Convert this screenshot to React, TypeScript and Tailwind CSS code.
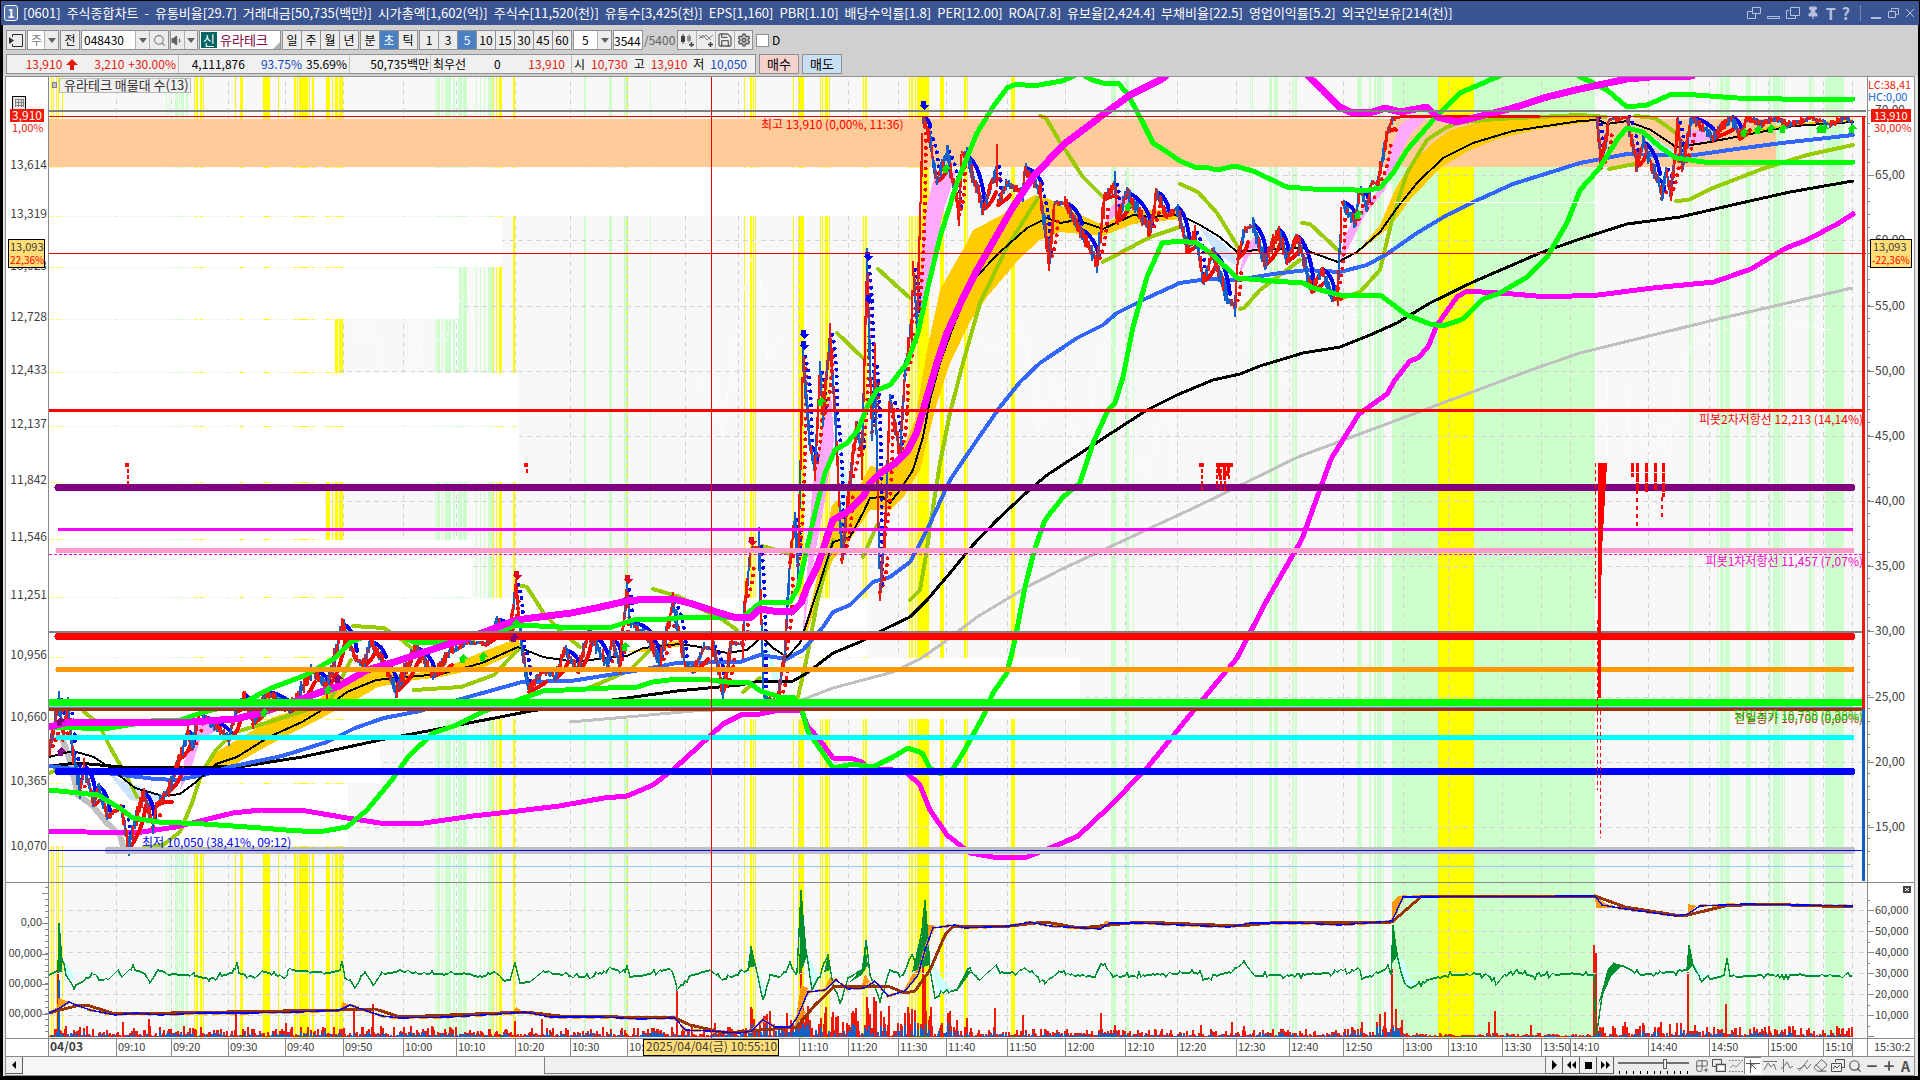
import React, { useState } from 'react';
import { Eraser, Grid2x2Plus, Minus, Pin, Plus, Save, Search, Settings, Volume1 } from 'lucide-react';

const TITLE =
  '[0601] 주식종합차트 - 유통비율[29.7] 거래대금[50,735(백만)] 시가총액[1,602(억)] 주식수[11,520(천)] 유통수[3,425(천)] EPS[1,160] PBR[1.10] 배당수익률[1.8] PER[12.00] ROA[7.8] 유보율[2,424.4] 부채비율[22.5] 영업이익률[5.2] 외국인보유[214(천)]';

const PERIODS = ['일', '주', '월', '년'];
const UNITS = ['분', '초', '틱'];
const INTERVALS = ['1', '3', '5', '10', '15', '30', '45', '60'];

// [x, width]
const YELLOW = [
  [51, 1], [53, 1], [56, 1], [58, 1], [62, 1], [194, 1], [196, 2], [200, 2], [203, 1], [235, 1], [240, 3], [263, 7],
  [278, 1], [294, 2], [297, 1], [299, 9], [309, 1], [312, 2], [326, 4], [332, 1], [335, 3], [339, 4], [493, 1],
  [496, 1], [499, 3], [513, 2], [627, 1], [744, 1], [750, 2], [753, 1], [755, 1], [793, 1], [798, 6], [820, 1],
  [822, 1], [825, 3], [829, 1], [863, 1], [865, 2], [909, 1], [911, 2], [915, 1], [917, 12], [940, 4], [964, 2],
  [967, 1], [1011, 4], [1438, 36],
];
const GREEN = [
  [166, 1], [169, 1], [175, 3], [179, 1], [181, 3], [186, 2], [435, 1], [437, 3], [442, 1], [445, 6], [453, 2],
  [458, 4], [463, 4], [476, 1], [480, 1], [484, 1], [488, 6], [584, 2], [609, 3], [624, 3], [650, 1], [1111, 5],
  [1126, 3], [1133, 1], [1250, 1], [1252, 1], [1269, 3], [1274, 4], [1292, 2], [1295, 2], [1357, 5], [1369, 2],
  [1374, 2], [1377, 5], [1383, 1], [1392, 203], [1689, 2], [1692, 1], [1717, 1], [1720, 4], [1725, 5], [1746, 5],
  [1756, 1], [1769, 2], [1773, 7], [1781, 2], [1784, 1], [1809, 3], [1813, 1], [1825, 19],
];

// volume profile: [top, bottom, right]
const PROFILE = [
  [168, 216, 922], [217, 267, 502], [268, 319, 459], [320, 372, 334], [373, 426, 519], [427, 482, 519],
  [483, 539, 324], [540, 597, 472], [598, 657, 867], [658, 719, 1080], [720, 783, 380], [784, 846, 348],
];

const TIMES: [number, string][] = [
  [116, '09:10'], [171, '09:20'], [228, '09:30'], [285, '09:40'], [343, '09:50'], [403, '10:00'], [456, '10:10'],
  [515, '10:20'], [570, '10:30'], [627, '10:'], [685, ''], [738, ''], [799, '11:10'], [848, '11:20'],
  [898, '11:30'], [946, '11:40'], [1007, '11:50'], [1065, '12:00'], [1125, '12:10'], [1177, '12:20'],
  [1236, '12:30'], [1289, '12:40'], [1343, '12:50'], [1403, '13:00'], [1448, '13:10'], [1502, '13:30'],
  [1541, '13:50'], [1570, '14:10'], [1648, '14:40'], [1709, '14:50'], [1768, '15:00'], [1823, '15:10'], [1852, ''],
];

const LEFT_LABELS: [number, string][] = [
  [165, '13,614'], [214, '13,319'], [266, '13,023'], [317, '12,728'], [370, '12,433'], [424, '12,137'],
  [480, '11,842'], [537, '11,546'], [595, '11,251'], [655, '10,956'], [717, '10,660'], [781, '10,365'],
  [846, '10,070'],
];
const LEFT_LOWER_LABELS: [number, string][] = [
  [922, '0,00'], [953, '00,000'], [983, '00,000'], [1013, '00,000'],
];

const RIGHT_LABELS: [number, string][] = [
  [110, '70,00'], [175, '65,00'], [240, '60,00'], [306, '55,00'], [371, '50,00'], [436, '45,00'], [501, '40,00'],
  [566, '35,00'], [631, '30,00'], [697, '25,00'], [762, '20,00'], [827, '15,00'],
];
const VOLUME_LABELS: [number, string][] = [
  [910, '60,000'], [931, '50,000'], [952, '40,000'], [973, '30,000'], [994, '20,000'], [1015, '10,000'],
];

// [y, thickness, color, from, to, round cap]
const LEVELS: [number, number, string, number, number, boolean?][] = [
  [110, 2, '#808080', 49, 1866],
  [631, 2, '#808080', 49, 1862],
  [410, 3, '#ff0000', 49, 1862],
  [487, 7, '#800080', 58, 1852, true],
  [529, 3, '#ff00ff', 58, 1853],
  [550, 5, '#ff99cc', 58, 1852, true],
  [636, 7, '#ff0000', 58, 1852, true],
  [669, 5, '#ff9900', 58, 1852, true],
  [737, 5, '#00ffff', 58, 1852, true],
  [771, 7, '#0000ff', 58, 1852, true],
  [850, 7, '#c0c0c0', 108, 1852, true],
  [866, 1, '#99ccff', 58, 1852],
];

const MAGENTA_UP = [
  '49,727 65,723 192,722 235,719 261,713 296,701 318,693 339,686 367,670 388,664 449,644 482,633 516,620 571,613 596,608 627,601 648,599 673,599 693,604 713,611 733,617 750,618 760,609 773,611 792,612 801,603 807,587 817,567 823,550 827,537 833,520 847,512 863,497 870,483 880,473 893,465 907,452 917,432 927,397 937,363 947,333 963,298 977,270 993,242 1013,207 1033,177 1063,145 1100,117 1130,95 1160,80 1166,76',
  '1308,76 1312,80 1323,90 1338,106 1350,112 1373,112 1385,108 1400,112 1427,107 1437,117 1457,122 1473,118 1513,108 1547,97 1580,89 1594,86 1627,79 1650,77 1692,76',
];
const MAGENTA_LOW = [
  '49,831 86,832 135,833 176,827 204,820 233,813 261,810 306,811 347,818 380,823 424,823 473,816 518,811 559,806 604,798 627,796 653,785 675,768 698,747 723,724 743,714 760,714 780,710 801,710 808,727 820,740 833,758 850,758 862,762 870,770 888,769 907,773 920,785 930,810 947,835 970,853 993,857 1027,857 1060,844 1078,836 1108,808 1147,768 1194,710 1237,658 1267,600 1302,539 1331,459 1359,414 1387,394 1395,380 1410,361 1418,358 1428,347 1437,325 1457,297 1467,291 1513,294 1547,297 1598,295 1653,288 1714,282 1751,269 1786,248 1807,240 1839,223 1853,214',
];
const LIME = [
  '49,727 82,728 110,728 151,721 180,720 204,712 245,702 269,689 306,675 335,658 351,642 367,636 384,633 400,636 416,643 445,642 482,637 518,625 559,627 612,627 633,620 667,619 687,617 743,617 760,603 790,602 798,588 805,557 815,513 825,473 835,450 847,443 858,430 867,407 877,390 890,385 907,363 918,333 928,287 940,237 957,183 977,133 993,107 1007,88 1017,84 1033,86 1062,81 1074,76',
  '1085,76 1092,80 1103,83 1118,83 1127,93 1140,117 1153,143 1167,152 1180,161 1197,168 1205,167 1217,170 1235,166 1253,171 1287,187 1313,189 1347,189 1363,191 1380,188 1393,173 1407,150 1435,118 1460,93 1490,80 1500,76',
  '1579,76 1607,90 1627,107 1647,105 1672,94 1696,95 1737,98 1782,99 1853,99',
  '49,790 98,795 118,807 133,818 159,822 204,824 261,828 286,830 318,832 347,827 367,810 392,780 408,757 433,733 457,725 482,712 518,700 543,691 608,688 637,687 653,682 677,679 710,680 727,682 750,683 760,691 780,697 793,697 802,710 808,732 823,753 833,768 853,764 873,767 893,757 908,748 922,753 930,768 940,774 953,769 963,753 985,713 993,693 1007,673 1015,640 1025,587 1035,548 1045,520 1063,497 1080,483 1093,443 1108,410 1115,403 1123,377 1133,327 1147,277 1162,243 1180,241 1197,243 1213,255 1237,278 1273,281 1303,283 1313,288 1340,295 1380,295 1407,315 1430,324 1443,326 1463,319 1483,299 1500,293 1527,277 1547,257 1567,223 1580,190 1598,170 1619,137 1627,128 1643,132 1660,147 1676,158 1704,162 1853,162',
];
const BLUE_MA =
  '49,766 122,775 155,779 176,780 204,775 229,767 282,756 327,742 355,728 384,718 420,711 461,699 522,682 571,681 640,670 677,663 740,662 760,655 787,659 803,650 823,627 833,612 850,605 873,582 890,577 910,562 922,540 933,517 950,480 977,440 1000,407 1020,382 1040,363 1077,338 1103,325 1117,313 1147,298 1180,283 1207,279 1237,280 1273,274 1307,270 1340,272 1367,265 1387,254 1417,233 1447,215 1480,199 1513,184 1580,163 1627,154 1688,156 1729,150 1782,143 1853,135';
const BLACK_MA =
  '49,766 78,763 122,767 184,768 245,766 302,757 339,749 380,740 433,730 469,723 531,711 627,698 677,691 740,685 760,681 793,681 807,673 833,653 860,642 887,628 910,617 927,600 950,573 973,545 997,520 1027,492 1047,475 1093,445 1147,410 1177,395 1213,380 1240,374 1260,366 1303,353 1340,347 1370,335 1397,323 1430,303 1473,282 1540,253 1580,239 1627,224 1680,217 1741,203 1790,192 1853,181';
const SILVER_MA =
  '570,722 627,717 693,711 780,707 807,698 833,688 893,672 920,659 943,643 977,617 1027,587 1060,570 1200,505 1298,457 1408,416 1531,370 1580,353 1714,320 1852,288';
const BASE_LINE =
  '49,757 73,751 94,757 110,768 135,788 163,796 180,794 196,782 216,764 237,757 269,737 302,722 327,707 347,692 376,680 408,677 441,674 482,663 518,647 543,657 576,662 612,657 627,656 643,648 680,644 700,647 727,653 747,650 762,637 773,648 787,657 800,643 810,613 823,573 833,542 850,537 863,513 870,498 883,497 890,503 900,490 913,470 923,437 930,400 940,363 953,327 973,280 1000,252 1027,228 1047,218 1060,223 1077,220 1103,229 1133,215 1150,217 1180,215 1200,225 1220,237 1237,252 1257,250 1303,248 1313,253 1338,262 1357,252 1380,232 1397,208 1417,183 1443,158 1473,143 1513,131 1580,121 1598,120 1607,124 1627,121 1651,130 1676,147 1704,143 1741,136 1770,130 1794,126 1853,122';

const OLIVE = [
  '49,773 65,767', '84,712 98,723 110,747 127,777 137,797',
  '143,848 163,845 180,832 192,803 202,772 216,750 233,733 269,722 314,708 330,700 351,660',
  '353,626 384,628 402,640 416,652', '414,690 461,687 494,675 508,660 518,650', '518,585 527,587 543,612 559,630 580,647',
  '584,690 612,678 630,670 650,650', '653,589 680,597 703,610 723,620 737,630', '743,692 760,678', '762,546 790,554',
  '798,697 807,657 817,603 827,563 833,540', '863,557 877,525', '910,600 920,590 926,555 930,527 940,463 950,413 963,363 980,303 1007,247 1038,198',
  '878,269 910,298', '837,333 863,358', '1040,116 1046,118 1060,142 1083,177 1103,197', '1103,262 1120,253 1150,237 1180,227',
  '1180,184 1198,192 1217,213 1240,250', '1240,309 1244,308 1260,290 1300,260', '1302,223 1310,224 1340,252',
  '1337,300 1360,292 1380,270 1392,220 1407,173 1427,140 1447,127 1463,122 1497,119 1580,115 1606,117', '1609,169 1635,164',
  '1635,116 1655,118 1676,133', '1676,201 1688,200 1713,188 1762,169 1807,155 1853,145',
];

const CLOUDS: [string, string][] = [
  ['#ffcc00', '196,782 204,770 216,752 240,738 257,728 273,717 300,709 320,698 335,688 347,678 365,668 376,664 400,675 440,670 482,652 518,638 522,650 482,668 441,677 408,681 378,687 347,705 302,728 269,745 237,763 216,770'],
  ['#ffcc00', '627,652 660,644 680,640 682,646 643,652'],
  ['#ffcc00', '800,643 812,600 822,555 832,505 840,497 860,485 870,466 880,468 900,455 915,420 927,350 940,290 950,272 965,246 973,230 1000,216 1013,207 1035,195 1047,198 1070,210 1103,225 1133,209 1180,211 1180,219 1133,224 1103,236 1060,232 1040,240 1020,258 987,297 970,322 950,363 935,410 920,470 905,495 890,510 870,510 850,540 833,560 820,590 808,630'],
  ['#ffcc00', '1355,255 1380,225 1395,190 1410,165 1430,145 1450,130 1480,122 1540,117 1598,116 1598,121 1540,129 1500,138 1470,150 1440,168 1410,200 1390,227 1370,243'],
  ['#ffcc00', '1735,137 1755,129 1790,124 1853,119 1853,123 1790,127'],
  ['#ffaaff', '802,640 808,560 812,490 822,430 831,393 834,440 825,500 812,570 804,630'],
  ['#ffaaff', '918,330 922,240 928,200 934,178 945,172 957,170 945,205 935,250 928,290'],
  ['#ffaaff', '1340,262 1345,235 1355,218 1370,200 1383,185 1392,145 1400,125 1412,116 1428,116 1410,135 1395,165 1385,190 1365,215 1350,245'],
  ['#ffaaff', '180,790 186,750 196,727 206,722 218,730 200,740 190,772'],
  ['#ffaaff', '1238,278 1245,250 1255,235 1258,245 1248,258'],
  ['#ffaaff', '1105,225 1112,205 1125,192 1130,203 1115,215'],
  ['#ffaaff', '1684,150 1690,130 1700,130 1712,138 1700,143'],
  ['#ccffff', '836,440 845,470 850,490 842,520 838,480'],
  ['#ccffff', '765,640 775,665 782,690 772,680'],
  ['#cce4ff', '94,760 120,780 150,790 165,797 150,803 130,800 110,775'],
  ['#cce4ff', '1200,227 1222,242 1237,258 1237,266 1215,252'],
  ['#cce4ff', '1640,128 1655,138 1676,152 1670,160 1650,145'],
];

const PRICE =
  '49,750 59,700 63,737 68,707 73,753 80,790 84,767 94,803 98,787 108,817 121,807 129,846 143,793 153,825 157,803 169,790 180,757 188,732 192,747 200,710 208,720 229,738 237,710 244,695 253,722 267,692 290,710 312,670 327,687 343,625 355,657 363,665 371,642 384,663 396,690 416,648 433,675 449,653 465,643 486,643 498,620 510,633 516,585 522,647 529,690 543,670 555,677 565,650 578,670 588,633 608,665 612,640 620,663 627,590 630,622 648,637 660,663 673,602 685,663 693,670 705,647 713,647 723,690 732,643 743,643 745,600 751,550 759,547 764,697 777,702 785,653 790,560 795,520 798,563 803,357 810,447 815,467 820,373 823,417 830,335 835,413 842,557 850,480 857,427 862,453 867,267 872,430 875,367 880,590 885,533 890,397 900,453 905,373 912,320 913,270 917,320 923,118 928,133 937,180 947,152 959,213 962,152 967,157 983,208 993,180 997,167 998,203 1007,183 1023,193 1025,168 1040,190 1049,260 1055,203 1065,203 1080,230 1097,262 1105,197 1115,185 1117,220 1127,193 1150,230 1157,193 1167,217 1177,208 1188,250 1195,233 1203,280 1213,253 1228,300 1235,305 1238,257 1245,230 1253,225 1265,263 1278,230 1287,260 1297,237 1312,290 1322,270 1333,298 1338,287 1342,202 1355,223 1360,190 1367,207 1372,182 1378,183 1388,130 1393,118 1400,116';
const PRICE_LATE =
  '1597,118 1601,166 1609,120 1627,117 1637,165 1643,143 1658,180 1662,196 1666,170 1671,193 1678,123 1682,165 1692,118 1713,137 1731,117 1740,137 1747,118 1762,124 1775,118 1790,125 1810,118 1830,124 1845,118 1853,122';

const OSC =
  '49,975 58,970 59,925 62,960 66,975 74,987 80,983 95,974 100,980 108,980 118,970 122,977 131,968 145,974 150,983 158,970 170,974 195,976 210,979 235,972 237,962 239,973 255,978 262,971 285,978 288,970 330,973 340,970 342,961 345,978 350,980 355,988 365,972 374,985 380,975 400,971 420,974 470,974 480,978 495,972 505,980 510,980 515,963 520,983 530,982 543,971 555,974 590,978 610,968 625,972 627,966 630,977 650,974 672,968 677,990 690,976 710,970 722,980 740,974 748,970 751,949 756,968 763,1001 770,975 780,977 790,965 797,975 801,890 806,950 812,990 820,974 828,955 833,985 840,1003 848,978 862,970 866,940 870,975 880,1000 890,970 903,975 912,955 915,965 922,930 925,897 930,970 935,998 945,992 957,990 968,969 980,980 996,965 1000,973 1020,972 1024,968 1045,982 1060,972 1095,977 1101,963 1115,977 1160,974 1200,973 1203,980 1235,970 1244,962 1255,976 1335,973 1343,968 1350,973 1358,968 1362,979 1385,970 1388,965 1391,975 1393,925 1397,955 1405,985 1411,988 1430,979 1450,975 1480,974 1494,978 1496,985 1505,974 1515,972 1533,976 1570,974 1594,975 1596,1035 1602,998 1608,970 1615,964 1625,967 1640,975 1680,971 1687,970 1689,945 1693,965 1700,979 1712,979 1724,975 1727,958 1730,976 1738,977 1760,975 1853,976';
const OSC_FILLS: [string, string][] = [
  ['#ccffff', '62,960 68,965 76,980 66,978'], ['#ccffff', '806,950 815,970 818,980 812,988'],
  ['#ccffff', '756,968 766,990 763,1000'], ['#ccffff', '929,955 940,975 952,990 938,995'],
  ['#ccffff', '1397,953 1404,962 1410,980 1420,984 1405,986'], ['#ccffff', '1692,962 1700,970 1708,979 1698,978'],
  ['#009030', '58,972 59,925 62,958 62,972'], ['#009030', '799,975 801,892 807,955 804,965'],
  ['#009030', '824,972 828,955 831,970'], ['#009030', '850,982 862,968 865,945 868,965 862,975'],
  ['#009030', '912,972 922,935 925,898 929,965'], ['#009030', '958,990 967,970 971,972'],
  ['#009030', '1391,965 1393,926 1398,955'], ['#009030', '1598,1005 1608,968 1615,963 1622,966 1612,975 1604,992'],
  ['#009030', '1687,972 1689,945 1693,965'], ['#009030', '748,968 751,949 756,966'],
];
const TREND_BLUE =
  '49,1013 60,1008 69,1002 76,1005 90,1010 115,1015 135,1013 160,1015 200,1013 250,1013 300,1012 340,1010 350,1005 370,1012 382,1016 400,1018 450,1017 500,1014 525,1012 550,1017 600,1017 640,1019 675,1018 685,1030 710,1031 740,1033 752,1031 763,1020 775,1027 790,1027 797,1018 808,992 825,990 836,980 848,989 865,988 875,981 888,996 905,991 918,975 925,950 933,928 955,925 965,928 1010,926 1030,922 1050,926 1100,929 1110,923 1140,923 1180,925 1230,927 1250,923 1300,923 1340,925 1392,921 1403,897 1595,896 1602,905 1625,909 1655,913 1675,916 1688,914 1700,906 1745,904 1853,906';
const TREND_BROWN =
  '49,1013 60,1010 80,1005 90,1006 115,1014 340,1010 375,1009 400,1017 525,1012 560,1016 675,1018 690,1025 725,1033 797,1027 815,1005 835,986 870,986 890,987 905,993 915,991 930,970 945,935 953,926 1010,926 1045,922 1080,928 1110,925 1140,922 1240,926 1270,923 1392,922 1422,896 1595,896 1625,907 1675,915 1688,915 1725,906 1760,904 1853,907';
const ORANGE_FILLS = [
  '57,1010 58,998 63,1000 69,1002 60,1009', '340,1010 343,1002 350,1005', '513,1012 516,1007 522,1011',
  '790,1026 796,1018 801,985 808,988 802,1015', '824,990 830,977 836,980', '861,988 865,974 870,982',
  '903,992 912,975 920,965 928,925 934,925 926,955 918,975', '1101,928 1105,921 1113,922', '1392,921 1392,902 1398,896 1405,896',
  '1595,896 1596,908 1612,908', '1688,914 1688,904 1697,906', '794,1028 800,1010 806,1012',
];

const SPIKES = [
  [58, 68], [123, 15], [149, 18], [236, 26], [286, 14], [354, 26], [373, 33], [515, 16], [542, 18], [677, 46],
  [715, 14], [751, 30], [770, 26], [801, 138], [803, 50], [808, 30], [826, 30], [833, 25], [849, 12], [867, 40],
  [874, 40], [876, 36], [889, 12], [909, 24], [912, 28], [923, 120], [925, 60], [967, 19], [995, 29], [1023, 22],
  [1101, 24], [1115, 12], [1201, 12], [1232, 15], [1244, 11], [1362, 15], [1385, 25], [1392, 68], [1396, 28],
  [1402, 17], [1489, 15], [1495, 26], [1531, 12], [1594, 92], [1596, 84], [1640, 11], [1661, 15], [1688, 65],
  [1726, 33], [1775, 8], [1839, 9], [1852, 10],
];

const ARROWS: [number, number, 'up' | 'down', string][] = [
  [923, 105, 'down', '#0000ff'], [803, 334, 'down', '#0000ff'], [803, 345, 'down', '#0000ff'], [867, 256, 'down', '#0000ff'],
  [868, 299, 'down', '#0000ff'], [516, 575, 'down', '#e00020'], [627, 579, 'down', '#e00020'], [751, 541, 'down', '#e00020'],
  [59, 722, 'up', '#800080'], [60, 752, 'up', '#800080'], [513, 638, 'up', '#800080'], [337, 679, 'up', '#800080'],
  [263, 713, 'up', '#00e600'], [327, 690, 'up', '#00e600'], [462, 659, 'up', '#00e600'], [482, 657, 'up', '#00e600'],
  [515, 624, 'up', '#00e600'], [624, 647, 'up', '#00e600'], [820, 402, 'up', '#00e600'], [945, 169, 'up', '#00e600'],
  [1127, 207, 'up', '#00e600'], [1357, 215, 'up', '#00e600'], [1743, 133, 'up', '#00e600'], [1757, 130, 'up', '#00e600'],
  [1770, 129, 'up', '#00e600'], [1782, 129, 'up', '#00e600'], [1819, 129, 'up', '#00e600'], [1823, 129, 'up', '#00e600'],
  [1851, 129, 'up', '#00e600'],
];

const noise = (n: number) => {
  const v = Math.sin(n * 127.1) * 43758.5453;
  return v - Math.floor(v);
};

const parse = (points: string) => points.split(' ').map((p) => p.split(',').map(Number));

// adds small ticks between the anchor points of the oscillator
const roughen = (points: string) => {
  const pts = parse(points);
  const out: string[] = [];
  for (let i = 1; i < pts.length; i++) {
    const [x0, y0] = pts[i - 1];
    const [x1, y1] = pts[i];
    for (let x = x0; x < x1; x += 2) {
      const y = y0 + ((y1 - y0) * (x - x0)) / (x1 - x0);
      const kick = noise(x + 1) > 0.7 ? (noise(x + 5) - 0.5) * 7 : 0;
      out.push(`${x},${Math.round(y + kick)}`);
    }
  }
  return out.join(' ');
};

const buildCandles = (source: string) => {
  const pts = parse(source);
  let red = '';
  let blue = '';
  const trails = { fall: '', fallSteep: '', rise: '', riseSteep: '' };
  for (let i = 1; i < pts.length; i++) {
    const [x0, y0] = pts[i - 1];
    const [x1, y1] = pts[i];
    const dy = y1 - y0;
    const amp = Math.min(10, 3 + Math.abs(dy) / 7);
    for (let x = x0; x < x1; x++) {
      const t = (x - x0) / (x1 - x0);
      const step = Math.abs(dy) / (x1 - x0) / 2;
      const y = y0 + dy * t;
      const top = Math.max(116, Math.round(y - step - noise(x) * amp));
      const bottom = Math.round(y + step + noise(x + 7) * amp);
      const seg = `M${x} ${top}V${Math.max(bottom, top + 2)}`;
      if (noise(x * 3) > (dy < 0 ? 0.4 : 0.6)) red += seg;
      else blue += seg;
    }
    const steep = Math.abs(dy) > (x1 - x0) * 4;
    if (dy > 10) {
      const d = `M${x0 + 2} ${y0}Q${x0 + (x1 - x0) * 0.6 + 4} ${y0 + dy * 0.2} ${x1 + 2} ${y1 - 6}`;
      if (steep) trails.fallSteep += d;
      else trails.fall += d;
    }
    if (dy < -10) {
      const d = `M${x0} ${y0 + 2}Q${x0 + (x1 - x0) * 0.5 + 5} ${y0 + dy * 0.2} ${x1 + 3} ${y1 + 12}`;
      if (steep) trails.riseSteep += d;
      else trails.rise += d;
    }
  }
  return { red, blue, trails };
};

const Candles = ({ source }: { source: string }) => {
  const { red, blue, trails } = buildCandles(source);
  return (
    <g fill="none">
      <g strokeWidth={4} strokeLinecap="round">
        <path d={trails.rise} stroke="#ff0000" />
        <path d={trails.fall} stroke="#0000ff" />
        <path d={trails.riseSteep} stroke="#ff0000" strokeDasharray="0 7" />
        <path d={trails.fallSteep} stroke="#0000ff" strokeDasharray="0 7" />
      </g>
      <path d={blue} stroke="#1060c8" strokeWidth={1.4} />
      <path d={red} stroke="#f01808" strokeWidth={1.4} />
    </g>
  );
};

const Lines = ({ list, color, width }: { list: string[]; color: string; width: number }) => (
  <g fill="none" stroke={color} strokeWidth={width} strokeLinecap="round" strokeLinejoin="round">
    {list.map((points) => (
      <polyline key={points} points={points} />
    ))}
  </g>
);

const VolumeBars = () => {
  let red = '';
  let blue = '';
  for (let x = 50; x < 1853; x += 1) {
    const busy = x > 745 && x < 960 ? 3 : x > 1375 && x < 1400 ? 3 : x > 1600 && x < 1700 ? 1.4 : 1;
    const quiet = x > 1405 && x < 1594 ? 0.3 : x > 1000 && x < 1340 ? 0.7 : 1;
    const h = Math.round(Math.pow(noise(x), 3) * 10 * busy * quiet) + 1;
    red += `M${x} 1037V${1037 - h}`;
    if (noise(x + 3) > 0.6) blue += `M${x} 1037V${1037 - Math.round(h * 0.4 + noise(x + 9) * 2 * quiet * busy)}`;
  }
  return (
    <g strokeWidth={1.2} fill="none">
      <path d={red} stroke="#f01808" />
      <path d={SPIKES.map(([x, h]) => `M${x} 1037v${-h}`).join('')} stroke="#f01808" strokeWidth={1.6} />
      <path d={blue} stroke="#1060c8" />
      <path d="M59 1037V980" stroke="#1060c8" />
    </g>
  );
};

const arrowPath = (x: number, y: number, dir: 'up' | 'down') =>
  dir === 'down'
    ? `M${x - 2} ${y - 4}h5v4h3l-5 5l-5 -5h2z`
    : `M${x - 2} ${y + 4}h5v-4h3l-5 -5l-5 5h2z`;

const Chart = () => {
  const rightTicks: string[] = [];
  for (let i = 0; i < 59; i++) rightTicks.push(`M1867 ${110 + i * 13}h3`);
  const leftTicks: string[] = [];
  for (let i = 0; i < 25; i++) leftTicks.push(`M48 ${887 + i * 6}h-3`);

  return (
    <svg viewBox="6 77 1908 980" className="block h-auto w-full bg-white text-[12px]" shapeRendering="crispEdges" role="img" aria-label="유라테크">
      <defs>
        <clipPath id="plot">
          <rect x={49} y={77} width={1817} height={961} />
        </clipPath>
      </defs>
      <rect x={49} y={77} width={1817} height={961} fill="#f8f8f8" />
      <g clipPath="url(#plot)">
        {GREEN.map(([x, w]) => (
          <rect key={x} x={x} y={77} width={w} height={961} fill="#ccffcc" />
        ))}
        {YELLOW.map(([x, w]) => (
          <rect key={x} x={x} y={77} width={w} height={961} fill="#ffff00" />
        ))}
        <g stroke="#d4d4d4" strokeDasharray="5 4" transform="translate(0.5 0.5)">
          {TIMES.map(([x]) => (
            <line key={x} x1={x} x2={x} y1={80} y2={1038} />
          ))}
          {RIGHT_LABELS.concat(VOLUME_LABELS).map(([y]) => (
            <line key={y} x1={49} x2={1866} y1={y} y2={y} />
          ))}
        </g>
        {PROFILE.map(([top, bottom, right]) => (
          <rect key={top} x={49} y={top} width={right - 49} height={bottom - top} fill="#ffffff" />
        ))}
        <rect x={49} y={119} width={1727} height={48} fill="#ffcc99" />

        <g fill="none" stroke="#ffffff" strokeDasharray="4 3" strokeWidth={1}>
          <path d="M354 320l4 20l6 -2l2 -18M374 320l3 30l5 20M410 373l6 -50l8 48M437 340l10 0l2 -20l12 -20l8 -10l5 40" />
          <path d="M700 390l10 -25l12 70l12 -85l10 -60l12 -50l12 120l12 -20" />
          <path d="M975 330l12 20l14 -5l14 -15l12 12l12 90l14 -55l14 35l18 60l10 -90l12 -50l20 45l8 80l12 20l20 -80l10 90M1020 325l8 30" />
          <path d="M1240 350l8 -30l10 50M1270 360l8 -30l8 50M1340 300v60M1350 290l5 30l12 -20" />
          <path d="M1607 463v-90M1630 460l-3 -75M1640 400l10 60l12 -30l8 30l4 -70l20 -50l60 -20l80 10" />
        </g>

        <polyline points="61,735 68,755 78,795 92,805 106,822 120,835 124,850" fill="none" stroke="#c0c0c0" strokeWidth={6} />
        {CLOUDS.map(([fill, points]) => (
          <polygon key={points} points={points} fill={fill} />
        ))}
        <Lines list={OLIVE} color="#99cc00" width={4} />
        <Lines list={[SILVER_MA]} color="#c0c0c0" width={3} />
        <Lines list={[BLACK_MA]} color="#000000" width={3} />
        <Lines list={[BLUE_MA]} color="#3366ff" width={4} />
        <Lines list={[BASE_LINE]} color="#000000" width={2} />
        <Lines list={MAGENTA_LOW} color="#ff00ff" width={5} />
        <Candles source={PRICE} />
        <Candles source={PRICE_LATE} />
        <path d="M1400 116H1540" stroke="#ff0000" strokeWidth={3} />
        <Lines list={LIME} color="#00ff00" width={5} />
        <Lines list={MAGENTA_UP} color="#ff00ff" width={7} />
        <path d="M1394 202.5H1597" stroke="#ffffff" />

        {LEVELS.map(([y, w, color, from, to, round]) => (
          <line
            key={y}
            x1={from}
            x2={to}
            y1={y + 0.5}
            y2={y + 0.5}
            stroke={color}
            strokeWidth={w}
            strokeLinecap={round ? 'round' : 'butt'}
          />
        ))}
        <path d="M49 554.5H1862" stroke="#ff00cc" strokeDasharray="3 2" />
        <path d="M49 850.5H1862" stroke="#0000ff" />
        <path d="M49 702.5H1862" stroke="#00ff00" strokeWidth={7} />
        <path d="M49 706.5H1852" stroke="#99ccff" />
        <path d="M49 707.5H1862" stroke="#808080" />
        <path d="M49 709.5H1862" stroke="#993300" strokeWidth={3} />

        <g stroke="#ff0000" fill="none">
          <path d="M127.5 463V486M526.5 463V473M1201.5 463V490M1217 463V488M1221 463V490M1225 463V492M1229 463V480" strokeWidth={2} strokeDasharray="4 2" />
          <path d="M1216 465H1233M1599 465H1607M125 465H129M524 465H528M1199 465H1204" strokeWidth={4} />
          <path d="M1218 466l3 14M1224 466v14M1229 466l-2 10" strokeWidth={3} />
          <path d="M1599.5 463V698" strokeWidth={3} />
          <path d="M1600.5 711V838M1595.5 463V598M1597.5 620V790" strokeDasharray="4 3" strokeWidth={1} />
          <path d="M1632 463V477M1637 463V490M1646 463V492M1655 463V490M1663 463V497" strokeWidth={3} strokeDasharray="9 1" />
          <path d="M1637 490V530M1662 497V518" strokeWidth={2} strokeDasharray="4 4" />
        </g>
        <polygon points="1598,463 1607,463 1602,550 1600,650 1598,600" fill="#ff0000" />

        {ARROWS.map(([x, y, dir, color]) => (
          <path key={`${x}-${y}`} d={arrowPath(x, y, dir)} fill={color} />
        ))}

        <VolumeBars />
        {ORANGE_FILLS.map((points) => (
          <polygon key={points} points={points} fill="#ff9900" />
        ))}
        <path d="M49 973.5H1596M1625 973.5H1853" stroke="#ccffff" />
        {OSC_FILLS.map(([fill, points]) => (
          <polygon key={points} points={points} fill={fill} />
        ))}
        <polyline points={roughen(OSC)} fill="none" stroke="#009030" strokeWidth={1.4} />
        <polyline points={TREND_BLUE} fill="none" stroke="#ff9900" strokeWidth={3} strokeDasharray="9 5" />
        <polyline points={TREND_BROWN} fill="none" stroke="#993300" strokeWidth={3} />
        <polyline points={TREND_BLUE} fill="none" stroke="#0000ff" strokeWidth={1.4} />

        <path d="M49 116.5H1866M49 253.5H1866M711.5 77V1038" stroke="#f00000" />
      </g>

      <rect x={1862} y={116} width={3} height={593} fill="#f01808" />
      <rect x={1862} y={709} width={3} height={172} fill="#1060c8" />

      <g stroke="#888888" fill="none">
        <path d="M6 882.5H1914M6 1038.5H1914M48.5 77V1056M1867.5 77V1056M6 1056.5H1914" />
        <path d={rightTicks.join('')} />
        <path d={leftTicks.join('')} />
        <path d="M1867 175h7M1867 240h7M1867 306h7M1867 371h7M1867 436h7M1867 501h7M1867 566h7M1867 631h7M1867 697h7M1867 762h7M1867 827h7" />
        <path d="M1867 910h7M1867 931h7M1867 952h7M1867 973h7M1867 994h7M1867 1015h7M1867 1036h7M1867 900h3M1867 921h3M1867 942h3M1867 963h3M1867 984h3M1867 1005h3M1867 1026h3" />
        <path d="M48 893h-6M48 923h-6M48 954h-6M48 984h-6M48 1014h-6" />
        <path d={TIMES.map(([x]) => `M${x + 0.5} 1038v18`).join('')} />
      </g>

      <g fill="#404040">
        {LEFT_LABELS.map(([y, label]) => (
          <text key={y} x={47} y={y + 4} textAnchor="end">{label}</text>
        ))}
        {LEFT_LOWER_LABELS.map(([y, label]) => (
          <text key={y} x={42} y={y + 4} textAnchor="end" className="text-[11px]">{label}</text>
        ))}
        {RIGHT_LABELS.map(([y, label]) => (
          <text key={y} x={1875} y={y + 4}>{label}</text>
        ))}
        {VOLUME_LABELS.map(([y, label]) => (
          <text key={y} x={1875} y={y + 4} className="text-[11px]">{label}</text>
        ))}
        <text x={50} y={1051} className="font-bold">04/03</text>
        {TIMES.map(([x, label]) => (
          <text key={x} x={x + 2} y={1051} className="text-[11px]">{label}</text>
        ))}
        <text x={1874} y={1051} className="text-[11px]">15:30:2</text>
      </g>

      <text x={761} y={129} fill="#ff0000">최고 13,910 (0,00%, 11:36)</text>
      <text x={142} y={847} fill="#0000ff">최저 10,050 (38,41%, 09:12)</text>
      <text x={1863} y={424} fill="#ff0000" textAnchor="end">피봇2차저항선 12,213 (14,14%)</text>
      <text x={1863} y={566} fill="#ff00cc" textAnchor="end">피봇1차저항선 11,457 (7,07%)</text>
      <text x={1863} y={723} fill="#993300" textAnchor="end">전일종가 10,700 (0,00%)</text>
      <text x={1863} y={720} fill="#00e000" textAnchor="end">당일시가 10,730 (0,28%)</text>

      <rect x={52.5} y={82.5} width={4} height={5} fill="#c0c0c0" stroke="#808080" />
      <rect x={59.5} y={78.5} width={131} height={14} fill="#f0f0f0" stroke="#b8b8b8" />
      <text x={64} y={90} fill="#303030" className="text-[13px]">유라테크 매물대 수(13)</text>

      <rect x={12.5} y={96.5} width={13} height={13} fill="#e8e8e8" stroke="#000000" />
      <path d="M15 99.5h9M15 102.5h9M15 105.5h9M15.5 99v8M18.5 99v8M21.5 99v8M23.5 99v8" stroke="#808080" />
      <rect x={10} y={109} width={34} height={13} fill="#f01808" />
      <text x={12} y={120} fill="#ffffff">3,910</text>
      <text x={12} y={132} fill="#f01808" className="text-[11px]">1,00%</text>
      <rect x={8.5} y={239.5} width={36} height={28} fill="#ffdd77" stroke="#000000" />
      <text x={10} y={251} fill="#404040" className="text-[11px]">13,093</text>
      <text x={10} y={264} fill="#ff0000" className="text-[10px]">22,36%</text>

      <rect x={1869} y={77} width={45} height={25} fill="#ffffff" />
      <text x={1868} y={89} fill="#f01808" className="text-[11px]">LC:38,41</text>
      <text x={1868} y={101} fill="#1060c8" className="text-[11px]">HC:0,00</text>
      <rect x={1871} y={109} width={40} height={13} fill="#f01808" />
      <text x={1874} y={120} fill="#ffffff" className="text-[11px]">13,910</text>
      <text x={1874} y={132} fill="#f01808" className="text-[11px]">30,00%</text>
      <rect x={1870.5} y={239.5} width={41} height={28} fill="#ffdd77" stroke="#000000" />
      <text x={1873} y={251} fill="#404040" className="text-[11px]">13,093</text>
      <text x={1872} y={264} fill="#ff0000" className="text-[10px]">-22,36%</text>

      <rect x={1903} y={886} width={8} height={7} fill="#404040" />
      <path d="M1905 888l4 3M1909 888l-4 3" stroke="#ffffff" shapeRendering="auto" />

      <rect x={643.5} y={1039.5} width={135} height={16} fill="#ffdd77" stroke="#000000" />
      <text x={646} y={1051} fill="#404040">2025/04/04(금) 10:55:10</text>
    </svg>
  );
};

const ArrowCell = () => (
  <span className="flex h-full w-[14px] items-center justify-center border-l border-[#b0b0b0] bg-[#ececec]">
    <svg width="8" height="5" viewBox="0 0 8 5"><path d="M0 0h8l-4 5z" fill="#606060" /></svg>
  </span>
);

const Group = ({ items, active, onSelect }: { items: string[]; active: string; onSelect: (v: string) => void }) => (
  <div className="flex h-5 border-y border-l border-[#909090]">
    {items.map((item) => (
      <button
        key={item}
        type="button"
        onClick={() => onSelect(item)}
        className={`flex w-[19px] items-center justify-center border-r border-[#909090] ${
          active === item ? 'bg-[#4a80c4] text-white' : 'bg-[#ececec]'
        }`}
      >
        {item}
      </button>
    ))}
  </div>
);

const Toolbar = () => {
  const [unit, setUnit] = useState('초');
  const [interval, setIntervalValue] = useState('5');
  const [period, setPeriod] = useState('');

  return (
    <div className="flex h-[29px] items-center gap-px bg-[#d0d0d0] pt-px pl-[3px]">
      <button type="button" aria-label="메뉴" className="flex h-5 w-5 items-center justify-center border border-[#909090] bg-[#ececec]">
        <svg width="14" height="13" viewBox="0 0 14 13" fill="none" stroke="#303030">
          <path d="M3.500 3V.500h10v12h-10V10" />
          <path d="M0 3v7l5-3.500z" fill="#303030" stroke="none" />
        </svg>
      </button>
      <button type="button" className="flex h-5 w-8 items-center justify-between border border-[#909090] bg-white pl-[3px] text-[#808080]">
        주<ArrowCell />
      </button>
      <button type="button" className="h-5 w-5 border border-[#909090] bg-[#ececec]">전</button>
      <div className="flex h-5 border border-[#909090] bg-white">
        <input aria-label="종목코드" defaultValue="048430" className="w-[53px] px-0.5 outline-none" />
        <ArrowCell />
        <button type="button" aria-label="검색" className="flex w-[19px] items-center justify-center border-l border-[#b0b0b0] bg-[#ececec]">
          <Search size={13} color="#808080" />
        </button>
      </div>
      <button type="button" aria-label="소리" className="flex h-5 w-7 items-center justify-between border border-[#909090] bg-[#ececec]">
        <Volume1 size={13} fill="#606060" color="#606060" />
        <ArrowCell />
      </button>
      <div className="flex h-5 w-[82px] items-center border border-[#909090] bg-white pl-px text-[13px] text-[#800040]">
        <span className="mr-[3px] flex h-4 w-4 items-center justify-center bg-[#006460] text-white">신</span>
        유라테크
        <svg className="mt-auto ml-auto" width="7" height="7" viewBox="0 0 7 7"><path d="M7 0v7H0z" fill="#b0b0b0" /></svg>
      </div>
      <Group items={PERIODS} active={period} onSelect={setPeriod} />
      <Group items={UNITS} active={unit} onSelect={setUnit} />
      <Group items={INTERVALS} active={interval} onSelect={setIntervalValue} />
      <button type="button" className="flex h-5 w-[39px] items-center justify-between border border-[#909090] bg-white pl-2">
        5<ArrowCell />
      </button>
      <input aria-label="조회건수" defaultValue="3544" className="h-5 w-[30px] border border-[#909090] bg-white outline-none" />
      <span className="w-8 text-[#606060]">/5400</span>
      <div className="flex h-5 border border-[#909090] bg-[#ececec] text-[#606060]">
        <button type="button" aria-label="차트유형" className="flex w-[18px] items-center justify-center">
          <svg width="15" height="15" viewBox="0 0 15 15">
            <path d="M1 3h4v6H1zM2.500 1h1v10h-1z" fill="#404040" />
            <path d="M7 3h4v5H7zM8.500 1h1v9h-1z" fill="#909090" />
            <path d="M9 11h5v1.500H9zM10.800 9h1.500v5h-1.500z" fill="#404040" />
          </svg>
        </button>
        <button type="button" aria-label="지표추가" className="flex w-[19px] items-center justify-center border-l border-[#b0b0b0]">
          <svg width="15" height="15" viewBox="0 0 15 15" fill="none" stroke="#808080">
            <path d="M0 6l4-4 4 5 6-5M0 2l3 3 4-3 5 5" />
            <path d="M9 11.500h5M11.500 9v5" stroke="#404040" strokeWidth="1.500" />
          </svg>
        </button>
        <button type="button" aria-label="저장" className="flex w-[19px] items-center justify-center border-l border-[#b0b0b0]"><Save size={16} /></button>
        <button type="button" aria-label="설정" className="flex w-[18px] items-center justify-center border-l border-[#b0b0b0]"><Settings size={14} strokeWidth={3} /></button>
      </div>
      <label className="ml-0.5 flex items-center gap-[3px]">
        <input type="checkbox" className="h-[13px] w-[13px] appearance-none border border-[#909090] bg-white" />D
      </label>
    </div>
  );
};

const PriceBar = () => (
  <div className="flex h-[22px] items-start gap-[3px] bg-[#d0d0d0] pl-[3px]">
    <div className="flex h-5 items-center border border-[#909090] bg-[#f0f0f0]">
      <div className="flex h-full w-[172px] items-center justify-end gap-1 border-r border-[#c0c0c0] pr-0.5 text-[#e81808]">
        <span>13,910</span>
        <svg width="12" height="11" viewBox="0 0 12 11"><path d="M6 0l6 6H8v5H4V6H0z" fill="#e81808" /></svg>
        <span className="ml-3">3,210</span>
        <span>+30.00%</span>
      </div>
      <div className="flex h-full w-[171px] items-center justify-end gap-1 border-r border-[#c0c0c0] pr-0.5">
        <span className="mr-3">4,111,876</span>
        <span className="text-[#1048c0]">93.75%</span>
        <span>35.69%</span>
      </div>
      <div className="flex h-full w-[81px] items-center justify-end border-r border-[#c0c0c0] pr-px">50,735백만</div>
      <div className="flex h-full w-[141px] items-center justify-between border-r border-[#c0c0c0] pr-1.5 pl-0.5">
        <span>최우선</span>
        <span>0</span>
        <span className="text-[#e81808]">13,910</span>
      </div>
      <div className="flex h-full w-[183px] items-center justify-between pr-2 pl-0.5">
        <span>시</span>
        <span className="text-[#e81808]">10,730</span>
        <span>고</span>
        <span className="text-[#e81808]">13,910</span>
        <span>저</span>
        <span className="text-[#1048c0]">10,050</span>
      </div>
    </div>
    <button type="button" className="h-5 w-10 border border-[#909090] bg-[#f6d0cc] text-[13px]">매수</button>
    <button type="button" className="h-5 w-10 border border-[#909090] bg-[#c8dff4] text-[13px]">매도</button>
  </div>
);

const TOOL_BUTTON = 'flex h-[17px] w-[17px] items-center justify-center';
const PLAY_BUTTON = 'flex h-[17px] w-[17px] items-center justify-center border-r border-b border-[#606060] bg-[#f0f0f0]';

const BottomBar = () => (
  <div className="flex h-[18px] items-start bg-[#ececec] text-[#505050]">
    <button type="button" aria-label="왼쪽" className={PLAY_BUTTON}>
      <svg width="4" height="8" viewBox="0 0 4 8"><path d="M4 0v8L0 4z" fill="#000" /></svg>
    </button>
    <div className="h-full flex-[12] bg-[#f6f6f6]" />
    <div className="h-[17px] flex-[23] border-r border-b border-l border-[#808080] bg-[#f0f0f0]" />
    <button type="button" aria-label="재생" className={PLAY_BUTTON}>
      <svg width="5" height="10" viewBox="0 0 5 10"><path d="M0 0v10l5-5z" fill="#000" /></svg>
    </button>
    <button type="button" aria-label="뒤로" className={PLAY_BUTTON}>
      <svg width="9" height="8" viewBox="0 0 9 8"><path d="M4 0v8L0 4zM9 0v8L5 4z" fill="#000" /></svg>
    </button>
    <button type="button" aria-label="정지" className={PLAY_BUTTON}><span className="h-[7px] w-[7px] bg-black" /></button>
    <button type="button" aria-label="앞으로" className={PLAY_BUTTON}>
      <svg width="9" height="8" viewBox="0 0 9 8"><path d="M0 0v8l4-4zM5 0v8l4-4z" fill="#000" /></svg>
    </button>
    <label className="relative ml-1 block h-full w-[71px]">
      <input type="range" aria-label="속도" defaultValue={66} className="absolute inset-0 w-full opacity-0" />
      <svg className="h-[18px] w-full" viewBox="0 0 71 18" shapeRendering="crispEdges">
        <path d="M0 5.5h71" stroke="#707070" strokeWidth="2" />
        <path d="M1.500 14v3M8.500 14v3M15.500 14v3M22.500 14v3M29.500 14v3M36.500 14v3M42.500 14v3M49.500 14v3M56.500 14v3M62.500 14v3M69.500 14v3" stroke="#000" />
        <rect x="45.500" y="2.500" width="3" height="9" fill="#f0f0f0" stroke="#606060" />
      </svg>
    </label>
    <div className="flex pl-1">
      <button type="button" aria-label="격자" className={TOOL_BUTTON}><Grid2x2Plus size={14} strokeWidth={1.5} /></button>
      <button type="button" aria-label="겹치기" className={TOOL_BUTTON}>
        <svg width="14" height="13" viewBox="0 0 14 13" fill="none" stroke="#505050"><path d="M.5.500h9v7h-9z" /><path d="M4.500 5.500h9v7h-9z" fill="#fff" strokeWidth="1.500" /></svg>
      </button>
      <button type="button" aria-label="구간" className={TOOL_BUTTON}>
        <svg width="14" height="12" viewBox="0 0 14 12" fill="none" stroke="#909090"><path d="M0 .5h14M0 11.500h14" strokeDasharray="2 1" /><path d="M1 8l3-3 3 2 5-5" /></svg>
      </button>
      <button type="button" aria-label="십자선" className={`${TOOL_BUTTON} border-t border-l border-[#808080] bg-white`}>
        <svg width="14" height="13" viewBox="0 0 14 13" fill="none" stroke="#505050"><path d="M0 3.500h14M4.500 0v13M5 4l5 5M5 8V4h4" /></svg>
      </button>
      <button type="button" aria-label="수평선" className={TOOL_BUTTON}>
        <svg width="14" height="13" viewBox="0 0 14 13" fill="none" stroke="#707070"><path d="M0 2.500h14M1 11l4-7 3 4 3-3 2 6" /></svg>
      </button>
      <button type="button" aria-label="수직선" className={TOOL_BUTTON}>
        <svg width="14" height="13" viewBox="0 0 14 13" fill="none" stroke="#707070"><path d="M3.500 0v13M1 10l3-3 3-4 3 6 3-2" /></svg>
      </button>
      <button type="button" aria-label="추세선" className={TOOL_BUTTON}>
        <svg width="14" height="13" viewBox="0 0 14 13" fill="none" stroke="#707070"><path d="M2 12L11 1M0 10l4-1 4-3 2 4 4-5" /></svg>
      </button>
      <button type="button" aria-label="지우기" className={TOOL_BUTTON}><Eraser size={15} strokeWidth={1.5} /></button>
      <button type="button" aria-label="차트복사" className={TOOL_BUTTON}>
        <svg width="14" height="13" viewBox="0 0 14 13" fill="none" stroke="#505050"><path d="M4.500 3V.5h9v8H11M.5 4.500h10v8H.5zM2 10l2-3 2 2 3-3" /></svg>
      </button>
      <button type="button" aria-label="돋보기" className={TOOL_BUTTON}><Search size={14} /></button>
      <button type="button" aria-label="축소" className={TOOL_BUTTON}><Minus size={14} strokeWidth={3} /></button>
      <button type="button" aria-label="확대" className={TOOL_BUTTON}><Plus size={14} strokeWidth={3} /></button>
      <button type="button" className={`${TOOL_BUTTON} text-sm font-bold`}>A</button>
    </div>
  </div>
);

const TitleBar = () => (
  <header className="flex h-6 items-center bg-[#3a5592] pr-1 pl-[3px] text-white">
    <span className="mr-[5px] flex h-4 w-[14px] items-center justify-center rounded-[3px] border border-white bg-[#5a74ac] font-bold">1</span>
    <h1 className="flex flex-1 gap-1.5 whitespace-nowrap text-[13px]">
      {TITLE.split(' ').map((part) => (
        <span key={part}>{part}</span>
      ))}
    </h1>
    <div className="flex items-center gap-1.5 text-[#b4c0dc]">
      <svg width="14" height="12" viewBox="0 0 14 12" fill="none" stroke="currentColor"><path d="M5.500 7V.5h8v6h-8M5 4.500H.5v7h8V7" /></svg>
      <svg width="13" height="12" viewBox="0 0 13 12" fill="none" stroke="currentColor"><path d="M.5 9.500h12v2H.5z" /></svg>
      <svg width="14" height="12" viewBox="0 0 14 12" fill="none" stroke="currentColor"><path d="M4.500.5h9v8h-9zM3 3.500H.5v8h9V9" /></svg>
      <Pin size={14} fill="currentColor" />
      <b className="text-base">T</b>
      <b className="text-base">?</b>
      <span className="mx-1 h-4 w-px bg-[#7088b8]" />
      <svg width="11" height="12" viewBox="0 0 11 12"><path d="M0 10h10v2H0z" fill="currentColor" /></svg>
      <svg width="11" height="12" viewBox="0 0 11 12" fill="none" stroke="currentColor"><path d="M3.500 4V1.500h7v6H8M.5 4.500h7v6h-7z" /></svg>
      <svg width="10" height="10" viewBox="0 0 10 10" stroke="currentColor"><path d="M1 1l8 8M9 1L1 9" /></svg>
    </div>
  </header>
);

export default () => {
  return (
    <div className="min-h-screen bg-black px-px pt-px pb-1 text-[12px] leading-4 text-black [font-family:'Noto_Sans_CJK_KR',sans-serif]">
      <TitleBar />
      <main className="mr-px ml-0.5 bg-[#e4e4e4]">
        <Toolbar />
        <PriceBar />
        <div className="mr-[3px] ml-0.5 border border-[#909090]">
          <Chart />
          <BottomBar />
        </div>
      </main>
    </div>
  );
};
